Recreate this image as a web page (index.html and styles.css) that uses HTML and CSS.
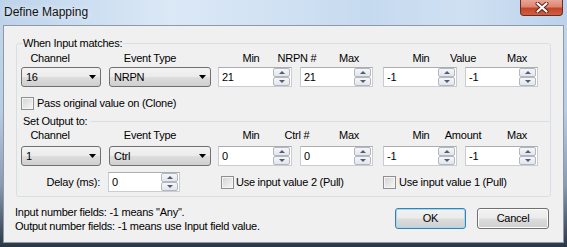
FILE: index.html
```html
<!DOCTYPE html>
<html>
<head>
<meta charset="utf-8">
<link rel="stylesheet" href="styles.css">
</head>
<body>
<div class="window">
  <div class="titlebar">
    <span class="title">Define Mapping</span>
    <div class="close">
      <svg width="16" height="11" viewBox="0 0 16 11"><path d="M3.5 1.5 L12.5 9.5 M12.5 1.5 L3.5 9.5" stroke="#5a1e16" stroke-width="4" stroke-linecap="round"/><path d="M3.5 1.5 L12.5 9.5 M12.5 1.5 L3.5 9.5" stroke="#fff" stroke-width="2.2" stroke-linecap="round"/></svg>
    </div>
  </div>
  <div class="client">
    <fieldset class="group">
      <legend>When Input matches:</legend>
      <div class="labels">
        <span class="lb lb-ch">Channel</span>
        <span class="lb lb-ev">Event Type</span>
        <span class="lb lb-min1">Min</span>
        <span class="lb lb-num">NRPN #</span>
        <span class="lb lb-max1">Max</span>
        <span class="lb lb-min2">Min</span>
        <span class="lb lb-val">Value</span>
        <span class="lb lb-max2">Max</span>
      </div>
      <div class="controls">
        <div class="combo c-ch"><span>16</span><svg class="arrow" width="7" height="4" viewBox="0 0 7 4"><path d="M0 0H7L3.5 4Z" fill="#000"/></svg></div>
        <div class="combo c-ev"><span>NRPN</span><svg class="arrow" width="7" height="4" viewBox="0 0 7 4"><path d="M0 0H7L3.5 4Z" fill="#000"/></svg></div>
        <div class="spin s1"><span class="val">21</span><div class="btns"><div class="b up"></div><div class="b dn"></div></div></div>
        <div class="spin s2"><span class="val">21</span><div class="btns"><div class="b up"></div><div class="b dn"></div></div></div>
        <div class="spin s3"><span class="val">-1</span><div class="btns"><div class="b up"></div><div class="b dn"></div></div></div>
        <div class="spin s4"><span class="val">-1</span><div class="btns"><div class="b up"></div><div class="b dn"></div></div></div>
      </div>
      <div class="checkrow">
        <span class="cb cb-clone"></span><span class="cbtext">Pass original value on (Clone)</span>
      </div>
      <div class="sep"><span>Set Output to:</span></div>
      <div class="labels labels2">
        <span class="lb lb-ch">Channel</span>
        <span class="lb lb-ev">Event Type</span>
        <span class="lb lb-min1">Min</span>
        <span class="lb lb-num">Ctrl #</span>
        <span class="lb lb-max1">Max</span>
        <span class="lb lb-min2">Min</span>
        <span class="lb lb-val">Amount</span>
        <span class="lb lb-max2">Max</span>
      </div>
      <div class="controls controls2">
        <div class="combo c-ch"><span>1</span><svg class="arrow" width="7" height="4" viewBox="0 0 7 4"><path d="M0 0H7L3.5 4Z" fill="#000"/></svg></div>
        <div class="combo c-ev"><span>Ctrl</span><svg class="arrow" width="7" height="4" viewBox="0 0 7 4"><path d="M0 0H7L3.5 4Z" fill="#000"/></svg></div>
        <div class="spin s1"><span class="val">0</span><div class="btns"><div class="b up"></div><div class="b dn"></div></div></div>
        <div class="spin s2"><span class="val">0</span><div class="btns"><div class="b up"></div><div class="b dn"></div></div></div>
        <div class="spin s3"><span class="val">-1</span><div class="btns"><div class="b up"></div><div class="b dn"></div></div></div>
        <div class="spin s4"><span class="val">-1</span><div class="btns"><div class="b up"></div><div class="b dn"></div></div></div>
      </div>
      <div class="row3">
        <span class="delay-label">Delay (ms):</span>
        <div class="spin s-delay"><span class="val">0</span><div class="btns"><div class="b up"></div><div class="b dn"></div></div></div>
        <div class="check check1"><span class="cb"></span><span class="cbtext">Use input value 2 (Pull)</span></div>
        <div class="check check2"><span class="cb"></span><span class="cbtext">Use input value 1 (Pull)</span></div>
      </div>
    </fieldset>
    <div class="footer">
      <div class="notes">
        <div>Input number fields: -1 means "Any".</div>
        <div>Output number fields: -1 means use Input field value.</div>
      </div>
      <div class="buttons">
        <div class="btn btn-ok">OK</div>
        <div class="btn btn-cancel">Cancel</div>
      </div>
    </div>
  </div>
</div>
</body>
</html>
```

FILE: styles.css
```css
html, body {
  margin: 0;
  padding: 0;
}
body {
  width: 567px;
  height: 247px;
  overflow: hidden;
  font-family: "Liberation Sans", Arial, sans-serif;
  font-size: 11px;
  letter-spacing: -0.25px;
  color: #000;
}
.window {
  width: 567px;
  height: 247px;
  display: flex;
  flex-direction: column;
  background: linear-gradient(180deg, #c4d7eb 0%, #b9cde2 45%, #8a9bb0 75%, #2a3644 100%);
}
.titlebar {
  height: 25px;
  flex: none;
  display: flex;
  align-items: flex-start;
  background: linear-gradient(90deg, #bdd3ea 0%, #c9dcf0 12%, #dbe8f6 30%, #d3e3f4 45%, #c6daef 65%, #cfe0f2 82%, #bcd2ea 100%);
}
.title {
  font-size: 12px;
  letter-spacing: 0;
  line-height: 14px;
  margin: 5px 0 0 4px;
  color: #111;
  text-shadow: 0 0 6px rgba(255,255,255,0.9);
}
.close {
  margin-left: auto;
  margin-right: 4px;
  width: 43px;
  height: 16px;
  box-sizing: border-box;
  border: 1px solid #6c2a22;
  border-top: none;
  border-radius: 0 0 4px 4px;
  background: linear-gradient(180deg, #e8a595 0%, #dc8670 45%, #c44328 55%, #d0603f 100%);
  display: flex;
  align-items: center;
  justify-content: center;
}
.client {
  height: 218px;
  margin: 0 3px;
  box-sizing: border-box;
  border: 1px solid #8e9aa7;
  background: #f0f0f0;
}
.group {
  margin: 11px 0 0 12px;
  width: 535px;
  box-sizing: border-box;
  border: 1px solid #d5dfe5;
  border-radius: 3px;
  padding: 0 0 4px 0;
  min-width: 0;
}
.group legend {
  margin-left: 5px;
  padding: 0 1px;
  line-height: 13px;
  font-size: 11px;
}
.labels {
  display: flex;
  height: 13px;
  line-height: 13px;
  margin-top: 2px;
  white-space: nowrap;
}
.labels2 {
  margin-top: 1px;
}
.lb {
  text-align: center;
  flex: none;
}
.lb-ch { width: 40px; margin-left: 13px; }
.lb-ev { width: 60px; margin-left: 50px; }
.lb-min1 { width: 30px; margin-left: 56px; }
.lb-num { width: 44px; margin-left: 9px; }
.lb-max1 { width: 30px; margin-left: 15px; }
.lb-min2 { width: 30px; margin-left: 42px; }
.lb-val { width: 50px; margin-left: 2px; }
.lb-max2 { width: 30px; margin-left: 14px; }

.controls {
  display: flex;
  height: 20px;
  margin-top: 2px;
}
.controls2 {
  margin-top: 4px;
}
.combo {
  flex: none;
  height: 20px;
  box-sizing: border-box;
  border: 1px solid #707070;
  border-radius: 3px;
  background: linear-gradient(180deg, #f3f3f3 0%, #ebebeb 48%, #dddddd 52%, #cfcfcf 100%);
  display: flex;
  align-items: center;
  padding: 0 4px 0 4px;
  line-height: 13px;
}
.combo .arrow {
  margin-left: auto;
}
.c-ch { width: 80px; margin-left: 4px; }
.c-ev { width: 102px; margin-left: 8px; }

.spin {
  flex: none;
  height: 20px;
  box-sizing: border-box;
  border: 1px solid #c9ccd2;
  border-top-color: #abadb3;
  background: #fff;
  display: flex;
  align-items: center;
}
.spin .val {
  padding-left: 3px;
  line-height: 13px;
}
.btns {
  margin-left: auto;
  margin-right: 1px;
  width: 17px;
  height: 18px;
  display: flex;
  flex-direction: column;
}
.b {
  height: 9px;
  box-sizing: border-box;
  border: 1px solid #b2b7c0;
  border-radius: 2px;
  background: linear-gradient(180deg, #f5f6f8 0%, #e3e6ea 100%);
  display: flex;
  align-items: center;
  justify-content: center;
}
.b::after {
  content: "";
  width: 0;
  height: 0;
  border-left: 3px solid transparent;
  border-right: 3px solid transparent;
}
.up::after {
  border-bottom: 3px solid #4f5d78;
}
.dn::after {
  border-top: 3px solid #4f5d78;
}
.s1 { width: 74px; margin-left: 7px; }
.s2 { width: 73px; margin-left: 8px; }
.s3 { width: 74px; margin-left: 10px; }
.s4 { width: 73px; margin-left: 8px; }
.s-delay { width: 72px; margin-left: 8px; }

.checkrow {
  display: flex;
  align-items: center;
  height: 13px;
  margin-top: 10px;
  line-height: 13px;
}
.cb {
  flex: none;
  width: 13px;
  height: 13px;
  box-sizing: border-box;
  border: 1px solid #8e8f8f;
  background: linear-gradient(135deg, #d2d2d2 0%, #e9e9e9 60%, #f6f6f6 100%);
  box-shadow: inset 0 0 0 1px #f4f4f4;
}
.cb-clone {
  margin-left: 4px;
}
.cbtext {
  margin-left: 3px;
  white-space: nowrap;
}
.sep {
  display: flex;
  align-items: center;
  height: 13px;
  line-height: 13px;
  margin-top: 5px;
  padding-left: 6px;
}
.sep::after {
  content: "";
  flex: 1;
  height: 1px;
  background: #d5dfe5;
  margin-left: 3px;
}
.row3 {
  display: flex;
  align-items: center;
  height: 20px;
  margin-top: 6px;
  line-height: 13px;
}
.delay-label {
  width: 83px;
  text-align: right;
  flex: none;
}
.check {
  display: flex;
  align-items: center;
  flex: none;
}
.check .cbtext {
  margin-left: 2px;
}
.check1 {
  width: 162px;
  margin-left: 41px;
}
.check2 {
  margin-left: 0;
}
.check2 .cbtext {
  margin-left: 3px;
}
.footer {
  display: flex;
  margin-top: 8px;
}
.notes {
  margin-left: 11px;
  line-height: 14px;
  white-space: nowrap;
}
.buttons {
  margin-left: auto;
  margin-right: 14px;
  margin-top: 3px;
  display: flex;
  gap: 11px;
}
.btn {
  height: 21px;
  box-sizing: border-box;
  border-radius: 3px;
  display: flex;
  align-items: center;
  justify-content: center;
  line-height: 13px;
}
.btn-ok {
  width: 71px;
  border: 1px solid #3c7fb1;
  box-shadow: inset 0 0 0 1px #9fdcf4;
  background: linear-gradient(180deg, #f2f2f2 0%, #ebebeb 48%, #dddddd 52%, #cfcfcf 100%);
}
.btn-cancel {
  width: 72px;
  border: 1px solid #707070;
  box-shadow: inset 0 0 0 1px #fcfcfc;
  background: linear-gradient(180deg, #f2f2f2 0%, #ebebeb 48%, #dddddd 52%, #cfcfcf 100%);
}
```
